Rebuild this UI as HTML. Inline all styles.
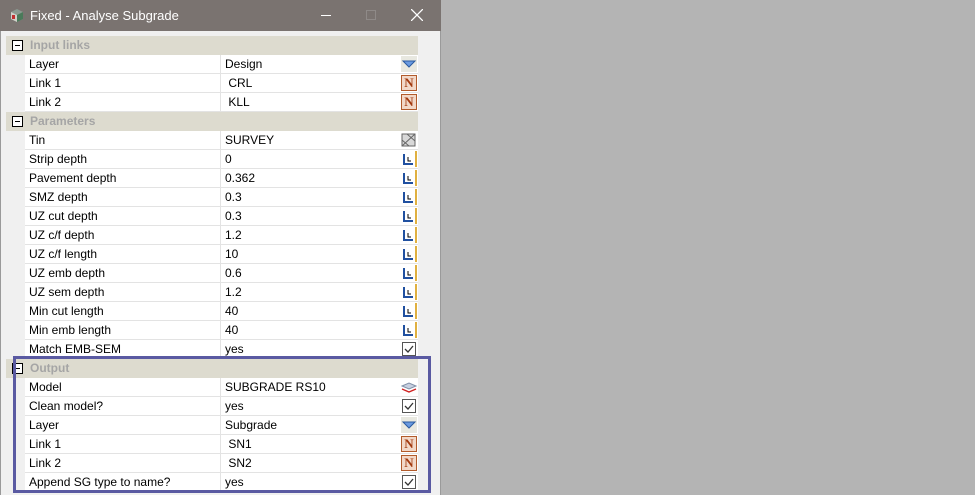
<!DOCTYPE html>
<html><head><style>
*{margin:0;padding:0;box-sizing:border-box}
body{width:975px;height:495px;background:#b4b4b4;position:relative;overflow:hidden;font-family:"Liberation Sans",sans-serif;font-size:12px;color:#000}
#win{position:absolute;left:0;top:0;width:441px;height:495px;background:#f0f0f0;border-left:1px solid #9a9a9a;border-right:1px solid #9a9a9a}
#tb{position:absolute;left:-1px;top:0;width:441px;height:31px;background:#7a7370;color:#fff;font-size:13px;font-weight:normal}
.r{position:absolute;left:24px;width:393px;height:19px;background:#fff;border-bottom:1px solid #e3e3e3}
.r .l{position:absolute;left:4px;top:2px}
.r .v{position:absolute;left:195px;top:0;height:18px;border-left:1px solid #e3e3e3;padding-left:4px;padding-top:2px;width:198px}
.h{position:absolute;left:5px;width:412px;height:19px;background:#dddbcf;color:#a5a5a5;font-weight:bold}
.h span{position:absolute;left:24px;top:2px}
.box{position:absolute;left:6px;top:4px;width:11px;height:11px;border:1px solid #000;background:#fff}
.box:after{content:"";position:absolute;left:2px;top:4px;width:5px;height:1px;background:#000}
.ic{position:absolute;right:1px;top:1px;width:16px;height:16px}
.n{background:#f2d8c8;border:1px solid #b25b2b;color:#a33a10;font-family:"Liberation Serif",serif;font-weight:bold;font-size:13px;line-height:14px;text-align:center}
.cb{border:1px solid #555;background:#fff;width:14px;height:14px;right:2px;top:2px}
</style></head><body>
<div id="win">
<div id="tb">
<svg style="position:absolute;left:10px;top:8px" width="14" height="15"><path d="M1 4 L7 1 L13 4 L13 11 L7 14 L1 11Z" fill="#8a9a90"/><path d="M1 4 L7 7 L7 14 L1 11Z" fill="#d0d0c8"/><path d="M7 7 L13 4 L13 11 L7 14Z" fill="#4a7a5a"/><rect x="2" y="7" width="3" height="4" fill="#c03030"/></svg>
<span style="position:absolute;left:30px;top:8px">Fixed - Analyse Subgrade</span>
<div style="position:absolute;left:321px;top:15px;width:10px;height:1px;background:#fff"></div>
<div style="position:absolute;left:366px;top:10px;width:10px;height:10px;border:1px solid #8f8a88"></div>
<svg style="position:absolute;left:411px;top:9px" width="12" height="12"><path d="M0 0L12 12M12 0L0 12" stroke="#fff" stroke-width="1.3"/></svg>
</div>

<div class="h" style="top:36px"><div class="box"></div><span>Input links</span></div>
<div class="r" style="top:55px"><div class="l">Layer</div><div class="v">Design</div><div class="ic" style="background:#e8e8e0"><svg width="16" height="16"><path d="M2 5 L14 5 L8 11Z" fill="#6a9ae0" stroke="#2a5aa0"/></svg></div></div>
<div class="r" style="top:74px"><div class="l">Link 1</div><div class="v">&nbsp;CRL</div><div class="ic n">N</div></div>
<div class="r" style="top:93px"><div class="l">Link 2</div><div class="v">&nbsp;KLL</div><div class="ic n">N</div></div>

<div class="h" style="top:112px"><div class="box"></div><span>Parameters</span></div>
<div class="r" style="top:131px"><div class="l">Tin</div><div class="v">SURVEY</div><div class="ic"><svg width="16" height="16"><rect x="1" y="2" width="13" height="12" fill="#d8d8d8" stroke="#666"/><path d="M1 14L14 2M1 8L8 14M6 2L14 9" stroke="#666" fill="none"/></svg></div></div>
<div class="r" style="top:150px"><div class="l">Strip depth</div><div class="v">0</div><div class="ic"><svg width="16" height="16"><path d="M3 3V13H12" stroke="#2050a0" stroke-width="2" fill="none"/><path d="M7 6V10H10" stroke="#000" fill="none"/><rect x="14" y="0" width="2" height="16" fill="#e0b040"/></svg></div></div>
<div class="r" style="top:169px"><div class="l">Pavement depth</div><div class="v">0.362</div><div class="ic"><svg width="16" height="16"><path d="M3 3V13H12" stroke="#2050a0" stroke-width="2" fill="none"/><path d="M7 6V10H10" stroke="#000" fill="none"/><rect x="14" y="0" width="2" height="16" fill="#e0b040"/></svg></div></div>
<div class="r" style="top:188px"><div class="l">SMZ depth</div><div class="v">0.3</div><div class="ic"><svg width="16" height="16"><path d="M3 3V13H12" stroke="#2050a0" stroke-width="2" fill="none"/><path d="M7 6V10H10" stroke="#000" fill="none"/><rect x="14" y="0" width="2" height="16" fill="#e0b040"/></svg></div></div>
<div class="r" style="top:207px"><div class="l">UZ cut depth</div><div class="v">0.3</div><div class="ic"><svg width="16" height="16"><path d="M3 3V13H12" stroke="#2050a0" stroke-width="2" fill="none"/><path d="M7 6V10H10" stroke="#000" fill="none"/><rect x="14" y="0" width="2" height="16" fill="#e0b040"/></svg></div></div>
<div class="r" style="top:226px"><div class="l">UZ c/f depth</div><div class="v">1.2</div><div class="ic"><svg width="16" height="16"><path d="M3 3V13H12" stroke="#2050a0" stroke-width="2" fill="none"/><path d="M7 6V10H10" stroke="#000" fill="none"/><rect x="14" y="0" width="2" height="16" fill="#e0b040"/></svg></div></div>
<div class="r" style="top:245px"><div class="l">UZ c/f length</div><div class="v">10</div><div class="ic"><svg width="16" height="16"><path d="M3 3V13H12" stroke="#2050a0" stroke-width="2" fill="none"/><path d="M7 6V10H10" stroke="#000" fill="none"/><rect x="14" y="0" width="2" height="16" fill="#e0b040"/></svg></div></div>
<div class="r" style="top:264px"><div class="l">UZ emb depth</div><div class="v">0.6</div><div class="ic"><svg width="16" height="16"><path d="M3 3V13H12" stroke="#2050a0" stroke-width="2" fill="none"/><path d="M7 6V10H10" stroke="#000" fill="none"/><rect x="14" y="0" width="2" height="16" fill="#e0b040"/></svg></div></div>
<div class="r" style="top:283px"><div class="l">UZ sem depth</div><div class="v">1.2</div><div class="ic"><svg width="16" height="16"><path d="M3 3V13H12" stroke="#2050a0" stroke-width="2" fill="none"/><path d="M7 6V10H10" stroke="#000" fill="none"/><rect x="14" y="0" width="2" height="16" fill="#e0b040"/></svg></div></div>
<div class="r" style="top:302px"><div class="l">Min cut length</div><div class="v">40</div><div class="ic"><svg width="16" height="16"><path d="M3 3V13H12" stroke="#2050a0" stroke-width="2" fill="none"/><path d="M7 6V10H10" stroke="#000" fill="none"/><rect x="14" y="0" width="2" height="16" fill="#e0b040"/></svg></div></div>
<div class="r" style="top:321px"><div class="l">Min emb length</div><div class="v">40</div><div class="ic"><svg width="16" height="16"><path d="M3 3V13H12" stroke="#2050a0" stroke-width="2" fill="none"/><path d="M7 6V10H10" stroke="#000" fill="none"/><rect x="14" y="0" width="2" height="16" fill="#e0b040"/></svg></div></div>
<div class="r" style="top:340px"><div class="l">Match EMB-SEM</div><div class="v">yes</div><div class="ic cb"><svg width="12" height="12"><path d="M2 6L5 9L10 3" stroke="#333" stroke-width="1.3" fill="none"/></svg></div></div>

<div class="h" style="top:359px"><div class="box"></div><span>Output</span></div>
<div class="r" style="top:378px"><div class="l">Model</div><div class="v">SUBGRADE RS10</div><div class="ic"><svg width="16" height="16"><path d="M1 7L8 4L15 7L8 10Z" fill="#c8d0e0" stroke="#8090a8"/><path d="M1 10L8 13L15 10" stroke="#d02020" fill="none" stroke-width="1.3"/></svg></div></div>
<div class="r" style="top:397px"><div class="l">Clean model?</div><div class="v">yes</div><div class="ic cb"><svg width="12" height="12"><path d="M2 6L5 9L10 3" stroke="#333" stroke-width="1.3" fill="none"/></svg></div></div>
<div class="r" style="top:416px"><div class="l">Layer</div><div class="v">Subgrade</div><div class="ic" style="background:#e8e8e0"><svg width="16" height="16"><path d="M2 5 L14 5 L8 11Z" fill="#6a9ae0" stroke="#2a5aa0"/></svg></div></div>
<div class="r" style="top:435px"><div class="l">Link 1</div><div class="v">&nbsp;SN1</div><div class="ic n">N</div></div>
<div class="r" style="top:454px"><div class="l">Link 2</div><div class="v">&nbsp;SN2</div><div class="ic n">N</div></div>
<div class="r" style="top:473px"><div class="l">Append SG type to name?</div><div class="v">yes</div><div class="ic cb"><svg width="12" height="12"><path d="M2 6L5 9L10 3" stroke="#333" stroke-width="1.3" fill="none"/></svg></div></div>

<div style="position:absolute;left:12px;top:356px;width:418px;height:137px;border:3px solid #5a5aa2"></div>
</div>
</body></html>
